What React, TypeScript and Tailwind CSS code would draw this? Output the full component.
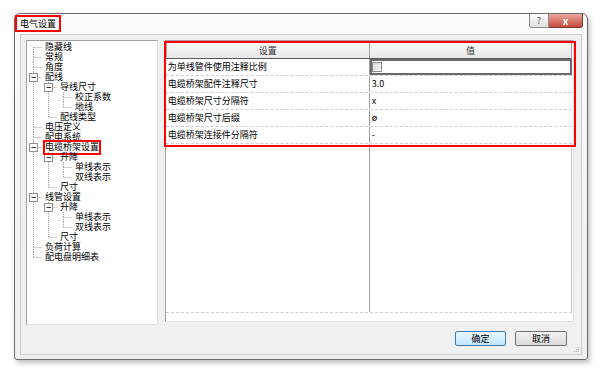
import React from "react";

type Node = { label: string; level: number; box?: boolean; mark?: boolean };

const tree: Node[] = [
  { label: "隐藏线", level: 0 },
  { label: "常规", level: 0 },
  { label: "角度", level: 0 },
  { label: "配线", level: 0, box: true },
  { label: "导线尺寸", level: 1, box: true },
  { label: "校正系数", level: 2 },
  { label: "地线", level: 2 },
  { label: "配线类型", level: 1 },
  { label: "电压定义", level: 0 },
  { label: "配电系统", level: 0 },
  { label: "电缆桥架设置", level: 0, box: true, mark: true },
  { label: "升降", level: 1, box: true },
  { label: "单线表示", level: 2 },
  { label: "双线表示", level: 2 },
  { label: "尺寸", level: 1 },
  { label: "线管设置", level: 0, box: true },
  { label: "升降", level: 1, box: true },
  { label: "单线表示", level: 2 },
  { label: "双线表示", level: 2 },
  { label: "尺寸", level: 1 },
  { label: "负荷计算", level: 0 },
  { label: "配电盘明细表", level: 0 },
];

const rows = [
  { name: "为单线管件使用注释比例", value: "", check: true },
  { name: "电缆桥架配件注释尺寸", value: "3.0" },
  { name: "电缆桥架尺寸分隔符", value: "x" },
  { name: "电缆桥架尺寸后缀", value: "ø" },
  { name: "电缆桥架连接件分隔符", value: "-" },
];

// does a later sibling exist at level k after index i
function continues(i: number, k: number) {
  for (let j = i + 1; j < tree.length; j++) {
    if (tree[j].level < k) return false;
    if (tree[j].level === k) return true;
  }
  return false;
}

function TreeRow({ node, index }: { node: Node; index: number }) {
  const L = node.level;
  const w = (L + 1) * 15;
  const cx = L * 15 + 6.5;
  const line = "#a0a0a0";
  return (
    <div className="flex h-[10px] items-center">
      <svg width={w} height={10} className="shrink-0">
        {Array.from({ length: L }).map((_, k) =>
          continues(index, k) ? (
            <line key={k} x1={k * 15 + 6.5} y1={0} x2={k * 15 + 6.5} y2={10} stroke={line} strokeDasharray="1 1" />
          ) : null
        )}
        {index > 0 && <line x1={cx} y1={0} x2={cx} y2={5} stroke={line} strokeDasharray="1 1" />}
        {continues(index, L) && <line x1={cx} y1={5} x2={cx} y2={10} stroke={line} strokeDasharray="1 1" />}
        <line x1={cx} y1={5.5} x2={w} y2={5.5} stroke={line} strokeDasharray="1 1" />
        {node.box && (
          <g>
            <rect x={cx - 4} y={1.5} width={8} height={8} fill="#fafafa" stroke="#919191" />
            <line x1={cx - 2} y1={5.5} x2={cx + 2.5} y2={5.5} stroke="#3a3a3a" />
          </g>
        )}
      </svg>
      <span className="relative ml-[3px] inline-block h-[10px] whitespace-nowrap text-[9px] leading-[10px]">
        {node.label}
        {node.mark && <span className="absolute -left-[2px] -right-[2px] -top-[2px] -bottom-[3px] border-2 border-[#ff0000]" />}
      </span>
    </div>
  );
}

export default function App() {
  return (
    <div className="h-[371px] w-[606px] bg-white pl-[14px] pt-[13px] font-['Noto_Sans_CJK_SC','Liberation_Sans',sans-serif] text-[9px] leading-[10px] text-black">
      <div className="flex h-[347px] w-[574px] flex-col rounded-t-[6px] rounded-b-[3px] border border-[#6b6b6b] bg-gradient-to-b from-[#fbfbfb] to-[#eceef1] shadow-[2px_3px_5px_rgba(0,0,0,0.25)]">
        {/* title bar */}
        <div className="flex h-[20px] items-start justify-between">
          <div className="mt-[1px] flex h-[17px] items-center border-2 border-[#ff0000] px-[3px]">电气设置</div>
          <div className="mr-[4px] flex h-[14px]">
            <div className="flex w-[20px] items-center justify-center rounded-bl-[3px] border border-t-0 border-[#8a8a8a] bg-gradient-to-b from-[#fdfdfd] to-[#dedede] text-[9px] text-[#555]">?</div>
            <div className="flex w-[34px] items-center justify-center rounded-br-[3px] border border-l-0 border-t-0 border-[#7b3b32] bg-gradient-to-b from-[#e9a89e] to-[#c5473a] text-[10px] font-bold text-white">x</div>
          </div>
        </div>

        {/* client */}
        <div className="relative mx-[5px] flex h-[321px] flex-col border border-[#cdcdcd] bg-[#f0f0f0] pl-[5px] pr-[7px] pt-[5px]">
          <div className="flex items-start gap-[7px]">
            {/* tree */}
            <div className="h-[285px] w-[132px] border border-[#a0a0a0] border-b-[#e3e3e3] border-r-[#e3e3e3] bg-white pt-[1px]">
              {tree.map((n, i) => (
                <TreeRow key={i} node={n} index={i} />
              ))}
            </div>

            {/* settings grid */}
            <div className="h-[282px] w-[410px] border border-[#a0a0a0] border-b-[#e3e3e3] border-r-[#e3e3e3] bg-white pr-[1px] pt-[1px]">
              <div className="relative">
                <div className="flex h-[17px] border border-[#a0a0a0] border-b-[#5a5a5a] bg-gradient-to-b from-[#f8f8f8] to-[#e9e9e9] text-[#333]">
                  <div className="flex w-[203px] items-center justify-center border-r border-[#a0a0a0]">设置</div>
                  <div className="flex flex-1 items-center justify-center">值</div>
                </div>
                {rows.map((r, i) => (
                  <div key={i} className="flex h-[17px] border-b border-dashed border-[#cfcfcf]">
                    <div className="flex w-[204px] items-center border-r border-[#a0a0a0] pl-[2px]">{r.name}</div>
                    <div className={"flex flex-1 items-center pl-[2px] " + (r.check ? "outline-2 -outline-offset-2 outline-[#6a6a6a]" : "")}>
                      {r.check ? (
                        <span className="h-[10px] w-[10px] border border-[#8e8f8f] bg-gradient-to-br from-[#d8d8d8] to-[#f7f7f7]" />
                      ) : (
                        r.value
                      )}
                    </div>
                  </div>
                ))}
                <div className="flex h-[169px] border-b border-dashed border-[#cfcfcf]">
                  <div className="w-[204px] border-r border-[#a0a0a0]" />
                  <div className="flex-1 border-r border-[#c8c8c8]" />
                </div>
                <div className="pointer-events-none absolute -left-[2px] -top-[1px] h-[106px] w-[412px] border-2 border-[#ff0000]" />
              </div>
            </div>
          </div>

          {/* buttons */}
          <div className="mr-[7px] mt-[6px] flex justify-end gap-[9px]">
            <button className="flex h-[15px] w-[51px] items-center justify-center rounded-[2px] border border-[#3d7bad] bg-gradient-to-b from-[#eaf6fd] to-[#bee6fd] text-[9px] leading-[10px]">确定</button>
            <button className="flex h-[15px] w-[52px] items-center justify-center rounded-[2px] border border-[#707070] bg-gradient-to-b from-[#f2f2f2] to-[#dbdbdb] text-[9px] leading-[10px]">取消</button>
          </div>

          <svg width="8" height="8" className="absolute bottom-[1px] right-[1px]">
            <rect x="6" y="2" width="1" height="1" fill="#b9b9b9" />
            <rect x="4" y="4" width="1" height="1" fill="#b9b9b9" />
            <rect x="6" y="4" width="1" height="1" fill="#b9b9b9" />
            <rect x="2" y="6" width="1" height="1" fill="#b9b9b9" />
            <rect x="4" y="6" width="1" height="1" fill="#b9b9b9" />
            <rect x="6" y="6" width="1" height="1" fill="#b9b9b9" />
          </svg>
        </div>
      </div>
    </div>
  );
}
